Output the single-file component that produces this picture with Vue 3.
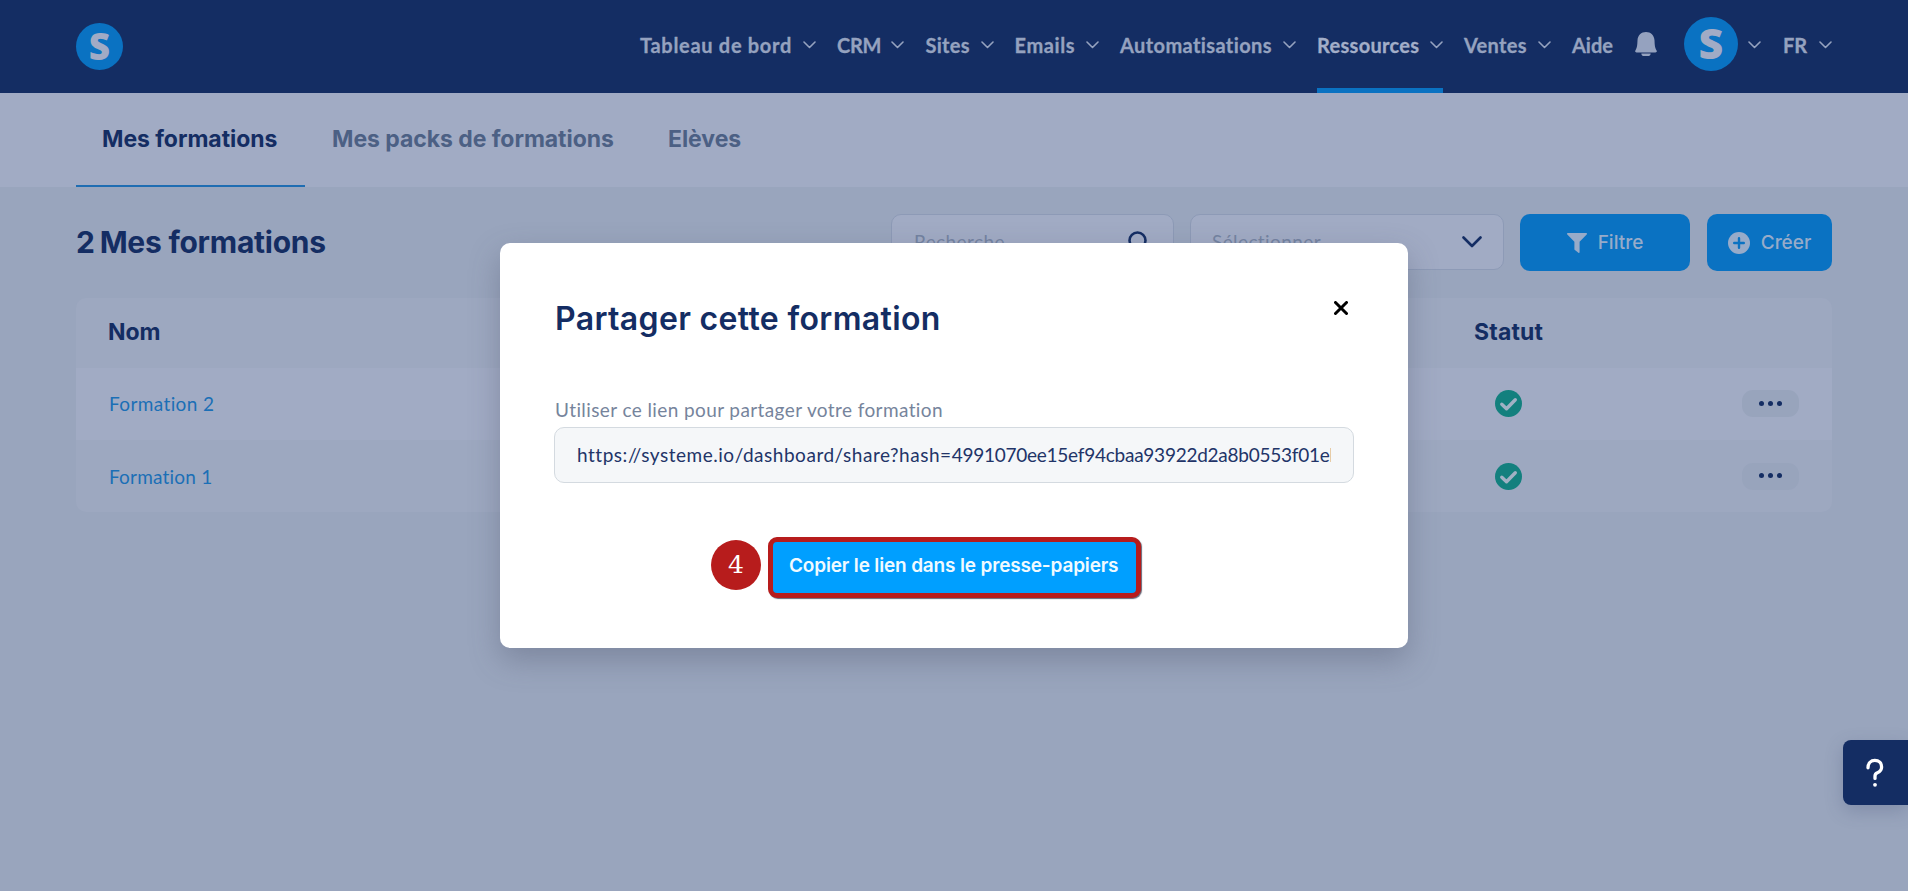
<script setup>
const nav = [
  { label: 'Tableau de bord', w: 151, gap: 12, after: 21, ls: 0.7 },
  { label: 'CRM', w: 43, gap: 11, after: 21.5, ls: -0.3 },
  { label: 'Sites', w: 44, gap: 11, after: 21, ls: 0.3 },
  { label: 'Emails', w: 60, gap: 11, after: 21.5, ls: 0.6 },
  { label: 'Automatisations', w: 152, gap: 11, after: 21, ls: 0.4 },
  { label: 'Ressources', w: 102, gap: 11, after: 21, ls: 0.3, active: true },
  { label: 'Ventes', w: 63, gap: 11, after: 21, ls: 0.3 }
]
const rows = ['Formation 2', 'Formation 1']
</script>

<template>
  <div class="page">
    <header class="top">
      <span class="logo">S</span>
      <nav class="nav">
        <a
          v-for="n in nav"
          :key="n.label"
          class="nav-item"
          :class="{ active: n.active }"
          :style="{ marginRight: n.after + 'px' }"
        >
          <span class="nav-label" :style="{ width: n.w + 'px', marginRight: n.gap + 'px', letterSpacing: n.ls + 'px' }">{{ n.label }}</span>
          <svg class="chev" width="13" height="8" viewBox="0 0 13 8"><path d="M1 1l5.5 5.5L12 1" /></svg>
        </a>
        <a class="nav-item aide"><span class="nav-label">Aide</span></a>
        <svg class="bell" width="22" height="24" viewBox="0 0 22 24">
          <path d="M11 0C15.8 0 19.3 3.5 19.5 8.2C19.7 13.5 20 16 21.6 18.4C22.2 19.6 21.6 20.4 20.4 20.4H1.6C.4 20.4-.2 19.6.4 18.4C2 16 2.3 13.5 2.5 8.2C2.7 3.5 6.2 0 11 0ZM6.3 21.4H15.7C15.5 23.2 14.4 24 13 24H9C7.6 24 6.5 23.2 6.3 21.4Z" />
        </svg>
        <span class="logo avatar">S</span>
        <svg class="chev chev-avatar" width="13" height="8" viewBox="0 0 13 8"><path d="M1 1l5.5 5.5L12 1" /></svg>
        <span class="nav-label lang">FR</span>
        <svg class="chev chev-lang" width="13" height="8" viewBox="0 0 13 8"><path d="M1 1l5.5 5.5L12 1" /></svg>
      </nav>
    </header>

    <div class="tabs">
      <a class="tab tab-1 on"><span>Mes formations</span></a>
      <a class="tab tab-2"><span>Mes packs de formations</span></a>
      <a class="tab tab-3"><span>Elèves</span></a>
    </div>

    <main class="content">
      <div class="toolbar">
        <h1 class="title"><span class="count">2</span>Mes formations</h1>
        <div class="field search">
          <span>Recherche</span>
          <svg width="22" height="22" viewBox="0 0 22 22"><circle cx="9.5" cy="9.5" r="8" /><path d="M15.5 15.5L20.5 20.5" /></svg>
        </div>
        <div class="field select">
          <span>Sélectionner</span>
          <svg width="20" height="12" viewBox="0 0 20 12"><path d="M1.5 1.5L10 10L18.5 1.5" /></svg>
        </div>
        <button class="btn filter">
          <svg width="20" height="20" viewBox="0 0 20 20"><path d="M.8 0H19.2C20 0 20.3.9 19.7 1.5L12.6 8.8V19.2C12.6 19.9 11.9 20.2 11.4 19.8L7.9 17.1C7.6 16.9 7.4 16.6 7.4 16.2V8.8L.3 1.5C-.3.9 0 0 .8 0Z" /></svg>
          <span>Filtre</span>
        </button>
        <button class="btn create">
          <svg width="22" height="22" viewBox="0 0 22 22"><circle cx="11" cy="11" r="11" /><path class="plus" d="M11 6.2V15.8M6.2 11H15.8" /></svg>
          <span>Créer</span>
        </button>
      </div>

      <section class="table">
        <div class="row head"><span class="name">Nom</span><span class="status">Statut</span></div>
        <div v-for="r in rows" :key="r" class="row">
          <a class="name link">{{ r }}</a>
          <svg class="check" width="27" height="27" viewBox="0 0 27 27"><circle cx="13.5" cy="13.5" r="13.5" /><path d="M6.8 14.2L11.5 18.7L20.3 9.7" /></svg>
          <span class="more"><i></i><i></i><i></i></span>
        </div>
      </section>
    </main>

    <div class="modal">
      <div class="modal-head">
        <h2>Partager cette formation</h2>
        <svg class="close" width="14" height="14" viewBox="0 0 14 14"><path d="M1.5 1.5L12.5 12.5M12.5 1.5L1.5 12.5" /></svg>
      </div>
      <label class="label">Utiliser ce lien pour partager votre formation</label>
      <div class="url"><div><span class="url-base">https://systeme.io/dashboard/share?hash=</span><span class="url-hash">4991070ee15ef94cbaa93922d2a8b0553f01eb</span></div></div>
      <div class="action">
        <span class="step">4</span>
        <button class="copy"><span>Copier le lien dans le presse-papiers</span></button>
      </div>
    </div>

    <div class="help">
      <svg width="20" height="32" viewBox="0 0 20 32"><path d="M3 10.8C3 6.2 6 3.4 9.8 3.4C13.9 3.4 16.6 6.2 16.6 9.9C16.6 13.2 14.6 14.8 12.4 15.7C10.6 16.4 10 17.2 10 19V21.4" /><circle cx="10" cy="27.8" r="1.9" /></svg>
    </div>
  </div>
</template>

<style>
html, body { margin: 0; background: #99a5bd; overflow: hidden; }
</style>

<style scoped>
* { box-sizing: border-box; }
.page { position: relative; width: 1908px; height: 891px; background: #99a5bd; font-family: Inter, "Liberation Sans", sans-serif; font-variant-ligatures: none; color: #142d63; white-space: nowrap; overflow: hidden; }
.top { height: 93px; background: #142d63; display: flex; align-items: flex-start; justify-content: space-between; padding: 0 76px; }
.logo { width: 47px; height: 47px; margin-top: 23px; border-radius: 50%; background: #0a72c2; color: #a1abc5; font: 800 37px/45px "Open Sans", sans-serif; text-align: center; }
.nav { display: flex; height: 93px; align-items: center; }
.nav-item { display: flex; align-items: center; height: 93px; border-bottom: 5px solid transparent; border-top: 3px solid transparent; }
.nav-item.active { border-bottom-color: #0a72c2; }
.nav-label { font: 700 20px/24px Lato, sans-serif; color: #95a2bf; margin-top: -2px; font-variant-ligatures: none; -webkit-text-stroke: .3px currentColor; }
.active .nav-label { color: #a3aec8; }
.chev { fill: none; stroke: #95a2bf; stroke-width: 1.6; stroke-linecap: round; stroke-linejoin: round; flex: none; margin-bottom: 2px; }
.aide { width: 63px; }
.bell { fill: #95a2bf; margin: 0 27px 5px 0; }
.avatar { width: 54px; height: 54px; margin: 0 10px 5px 0; font-size: 43px; line-height: 52px; }
.chev-avatar { margin-right: 22px; margin-bottom: 4px; }
.chev-lang { margin-bottom: 4px; }
.lang { width: 36px; margin-top: -4px; }
.tabs { height: 94px; background: #a1abc4; display: flex; padding-left: 76px; }
.tab { height: 94px; font-weight: 700; font-size: 23px; line-height: 92px; letter-spacing: -.05px; color: #4c6084; }
.tab-1 { width: 229px; padding-left: 26px; }
.tab-2 { width: 336px; padding-left: 27px; }
.tab-3 { padding-left: 27px; }
.tab.on { color: #142d63; border-bottom: 2px solid #1f6db2; }
.content { padding: 27px 76px 0; }
.toolbar { display: flex; height: 57px; }
.title { margin: 0; width: 815px; font-size: 30px; font-weight: 700; letter-spacing: -.25px; line-height: 57px; }
.count { margin-right: 5px; }
.field { height: 56px; border: 1px solid #8d9ab6; border-radius: 10px; background: #a1abc4; display: flex; align-items: center; justify-content: space-between; font: 400 19px/54px Lato, sans-serif; letter-spacing: .4px; color: #7483a1; }
.field svg { fill: none; stroke: #142d63; stroke-width: 2.6; stroke-linecap: round; stroke-linejoin: round; }
.search { width: 283px; padding: 0 23px 0 22px; margin-right: 16px; }
.select { width: 314px; padding: 0 21px; margin-right: 16px; }
.btn { border: 0; border-radius: 10px; height: 57px; padding: 0; background: #0a72c2; color: #97abc9; display: flex; align-items: center; justify-content: center; gap: 11px; font: 500 19px/24px Inter, sans-serif; }
.btn svg { fill: #97abc9; }
.btn .plus { stroke: #0a72c2; stroke-width: 2.4; stroke-linecap: round; }
.filter { width: 170px; margin-right: 17px; }
.create { width: 125px; }
.table { margin-top: 27px; border-radius: 10px; overflow: hidden; }
.row { height: 72px; display: flex; align-items: center; background: #a1abc4; padding-left: 33px; }
.row:last-child { background: #9da8c0; }
.head { height: 70px; background: #9da8c0; font-size: 23px; font-weight: 700; letter-spacing: -.05px; padding-left: 32px; }
.name { width: 1386px; }
.head .name { width: 1366px; }
.head .status { letter-spacing: .15px; }
.head span { position: relative; top: -1px; }
.link { font: 400 19px/24px Lato, sans-serif; letter-spacing: .38px; color: #1b6fb6; }
.row:last-child .link { padding-top: 2px; letter-spacing: .2px; }
.check { margin: 0 220px 1px 0; flex: none; }
.check circle { fill: #13807e; }
.check path { fill: none; stroke: #a1b1c4; stroke-width: 3.4; stroke-linecap: round; stroke-linejoin: round; }
.more { width: 57px; height: 27px; margin-bottom: 1px; border-radius: 11px; background: #98a4bc; display: flex; align-items: center; justify-content: center; gap: 3.2px; }
.more i { width: 5.8px; height: 5.8px; border-radius: 50%; background: #142d63; }
.row:last-child .check, .row:last-child .more { margin-bottom: 0; margin-top: 1px; }
.row:last-child .more { padding-bottom: 2px; }
.modal { position: absolute; left: 500px; top: 243px; width: 908px; height: 405px; border-radius: 10px; background: #fff; box-shadow: 0 12px 30px rgba(70, 75, 100, .34); padding: 53px 54px 0 55px; }
.modal-head { display: flex; justify-content: space-between; height: 102px; }
h2 { margin: 1px 0 0; font-size: 32px; font-weight: 600; line-height: 44px; letter-spacing: .34px; }
.close { margin: 5px 6px 0 0; fill: none; stroke: #000; stroke-width: 3; stroke-linecap: round; }
.label { display: block; height: 29px; font: 400 19px/24px Lato, sans-serif; letter-spacing: .4px; color: #76849c; }
.url { margin-left: -1px; height: 56px; border: 1px solid #d4dae0; border-radius: 10px; background: #f5f7f9; padding: 0 22px; font: 400 19px/54px Lato, sans-serif; color: #223468; }
.url div { overflow: hidden; }
.url-base { letter-spacing: .53px; }
.url-hash { letter-spacing: -.25px; }
.action { display: flex; align-items: flex-start; margin: 54px 0 0 156px; }
.step { width: 50px; height: 50px; margin: 3px 7px 0 0; border-radius: 50%; background: #b71c1c; color: #fff; text-align: center; font: 400 25px/50px "DejaVu Serif", serif; }
.copy { width: 373px; height: 61px; border: 5px solid #b71c1c; border-radius: 9px; background: #009fff; color: #f0faff; padding: 0 0 4px 16px; text-align: left; font: 600 19px/24px Inter, sans-serif; letter-spacing: -.16px; box-shadow: 1px 1px 1px #667; }
.help { position: absolute; right: 0; top: 740px; width: 65px; height: 65px; border-radius: 8px 0 0 8px; background: #142d63; display: flex; align-items: center; justify-content: center; padding-right: 1px; box-shadow: 0 6px 18px rgba(60, 70, 110, .25); }
.help path { fill: none; stroke: #fff; stroke-width: 3.3; stroke-linecap: round; }
.help circle { fill: #fff; }
</style>
